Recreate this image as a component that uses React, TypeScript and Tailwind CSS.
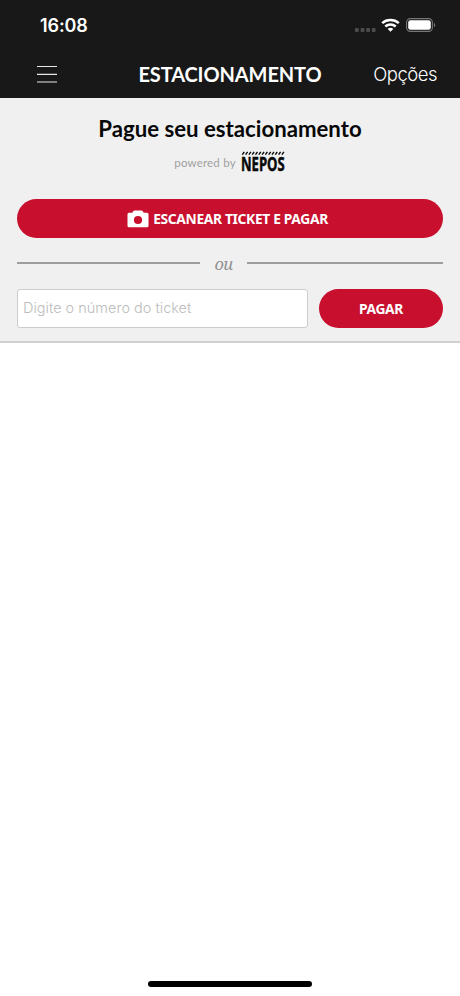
import React, { useState } from 'react';

const StatusBar: React.FC = () => (
    <div className="flex h-[51px] items-center justify-between pl-10 pr-6 text-white">
        <span className="font-['Inter',sans-serif] text-[18px] font-semibold leading-none tracking-[-0.1px]">16:08</span>
        <div className="flex items-center">
            <svg className="mt-[9px] h-[4px] w-[21px]" viewBox="0 0 21 4" fill="#4c4c4c">
                <rect x="0" width="3.8" height="4" rx="1" />
                <rect x="5.6" width="3.8" height="4" rx="1" />
                <rect x="11.2" width="3.8" height="4" rx="1" />
                <rect x="16.8" width="3.8" height="4" rx="1" />
            </svg>
            <svg className="ml-[5px] mt-[-1px] h-[14px] w-[19px]" viewBox="0 0 19 14" fill="none" stroke="currentColor" strokeWidth="2.5">
                <path d="M1.2 5.1C5.8.9 13.2.9 17.8 5.1" />
                <path d="M4.3 8.5C7.2 5.7 11.8 5.7 14.7 8.5" />
                <path d="M6.7 10.9C8.3 9.4 10.7 9.4 12.3 10.9L9.5 13.7Z" fill="currentColor" stroke="none" />
            </svg>
            <svg className="ml-[6px] mt-[-1px] h-[14px] w-[30px]" viewBox="0 0 30 14" fill="none">
                <rect x=".6" y=".6" width="25.8" height="12.8" rx="3.8" stroke="#777" strokeWidth="1.1" />
                <rect x="2.2" y="2.2" width="22.6" height="9.6" rx="2.3" fill="#fff" />
                <path d="M28 4.7C29.6 5.6 29.6 8.4 28 9.3Z" fill="#777" />
            </svg>
        </div>
    </div>
);

const NavBar: React.FC = () => (
    <nav className="grid h-[47px] grid-cols-[101px_1fr_101px] items-center text-white">
        <button className="ml-[37px] mt-[-1px] w-5" aria-label="Menu">
            <svg className="h-[18px] w-5" viewBox="0 0 20 18" stroke="#e6e6e6" strokeWidth="1.2">
                <path d="M0 1.5H20M0 9.3H20M0 17H20" />
            </svg>
        </button>
        <h1 className="mt-[-2px] whitespace-nowrap text-center font-['Lato',sans-serif] text-[20px] font-bold leading-none tracking-[-0.1px]">ESTACIONAMENTO</h1>
        <button className="mr-[23px] whitespace-nowrap text-right font-['Inter',sans-serif] text-[18.5px] font-light leading-none tracking-[-0.5px]">Opções</button>
    </nav>
);

const NeposLogo: React.FC = () => (
    <svg className="h-[22px] w-[45px] overflow-visible" viewBox="0 0 45 22" fill="#080808">
        <path
            d="M1.3 3.6L3.3.8M4.6 3.6L6.6.8M7.9 3.6L9.9.8M11.2 3.6L13.2.8M14.5 3.6L16.5.8M17.8 3.6L19.8.8M21.1 3.6L23.1.8M24.4 3.6L26.4.8M27.7 3.6L29.7.8M31 3.6L33 .8M34.3 3.6L36.3.8M37.6 3.6L39.6.8M40.9 3.6L42.9.8"
            stroke="#080808"
            strokeWidth="1.4"
        />
        <text
            x="0"
            y="20.3"
            textLength="74"
            lengthAdjust="spacingAndGlyphs"
            transform="scale(.59 1)"
            stroke="#080808"
            strokeWidth=".5"
            className="font-['Open_Sans',sans-serif] text-[19.5px] font-bold"
        >
            NEPOS
        </text>
    </svg>
);

const CameraIcon: React.FC = () => (
    <svg className="h-[18px] w-[22px]" viewBox="0 0 22 18">
        <path
            fill="#fff"
            fillRule="evenodd"
            d="M2 2.8H5.3L6.2 1.2Q6.7.4 7.6.4H14.4Q15.3.4 15.8 1.2L16.7 2.8H20Q21.5 2.8 21.5 4.3V15.7Q21.5 17.3 20 17.3H2Q.5 17.3.5 15.7V4.3Q.5 2.8 2 2.8ZM11 5.9A4.1 4.1 0 1 0 11 14.1A4.1 4.1 0 1 0 11 5.9Z"
        />
    </svg>
);

const PaymentPanel: React.FC = () => {
    const [ticket, setTicket] = useState('');

    return (
        <section className="h-[245px] border-b-2 border-[#d0d0d0] bg-[#f0f0f0] px-[17px] pt-[17px]">
            <h2 className="whitespace-nowrap text-center font-['Lato',sans-serif] text-[22.2px] font-bold leading-7 text-[#080808]">Pague seu estacionamento</h2>
            <div className="mt-[8px] flex h-[22px] items-center justify-center gap-[5px]">
                <span className="mt-px font-['Lato',sans-serif] text-[11.5px] leading-none tracking-[0.2px] text-[#a0a0a0]">powered by</span>
                <NeposLogo />
            </div>
            <button className="mt-[26px] flex h-[39px] w-full items-center justify-center gap-1 rounded-full bg-[#c8102e] pr-[5px] text-white">
                <CameraIcon />
                <span className="font-['Noto_Sans',sans-serif] text-[13.8px] font-bold leading-none tracking-[-0.34px]">ESCANEAR TICKET E PAGAR</span>
            </button>
            <div className="flex h-[51px] items-center">
                <span className="mt-[-1px] h-[2px] w-[183px] bg-[#9d9d9d]" />
                <span className="mt-px w-[47px] text-center font-['Noto_Serif','Liberation_Serif',serif] text-[16.5px] italic leading-none tracking-[-0.8px] text-[#929292]">ou</span>
                <span className="mt-[-1px] h-[2px] flex-1 bg-[#9d9d9d]" />
            </div>
            <div className="flex gap-[11px]">
                <input
                    className="h-[39px] w-[291px] rounded-[3px] border border-[#cccccc] bg-white px-[5px] pb-[2px] font-['Inter',sans-serif] text-[14.5px] font-light text-[#222] outline-none placeholder:text-[#bcbcbc]"
                    placeholder="Digite o número do ticket"
                    value={ticket}
                    onChange={event => setTicket(event.target.value)}
                />
                <button className="h-[39px] flex-1 rounded-full bg-[#c8102e] pt-px font-['Noto_Sans',sans-serif] text-[13.8px] font-bold tracking-[-0.34px] text-white">PAGAR</button>
            </div>
        </section>
    );
};

const App: React.FC = () => (
    <div className="flex h-[996px] w-[460px] flex-col bg-white">
        <header className="h-[98px] bg-[#181818]">
            <StatusBar />
            <NavBar />
        </header>
        <main className="flex-1">
            <PaymentPanel />
        </main>
        <footer className="flex h-[15px] justify-center">
            <div className="h-[6px] w-[164px] rounded-full bg-black" />
        </footer>
    </div>
);

export default App;
